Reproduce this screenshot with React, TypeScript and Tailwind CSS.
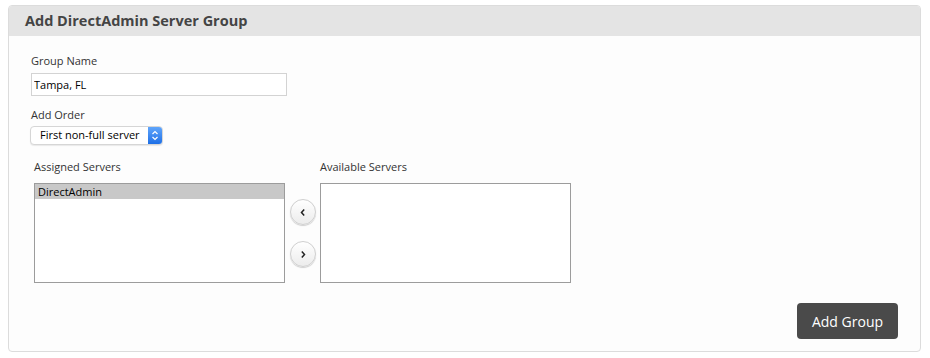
import React from 'react';

const labelCls = "text-[11px] leading-[16px] text-[#333]";

const ArrowButton: React.FC<{ dir: 'left' | 'right' }> = ({ dir }) => (
  <button
    type="button"
    className="w-[26px] h-[26px] rounded-full border border-[#cfcfcf] bg-gradient-to-b from-white to-[#ececec] shadow-[0_1px_1px_rgba(0,0,0,0.18)] flex items-center justify-center"
  >
    <svg width="8" height="9" viewBox="0 0 8 9">
      {dir === 'left' ? (
        <path d="M5.2 1.5 L2.5 4.5 L5.2 7.5" fill="none" stroke="#222" strokeWidth="1.5" />
      ) : (
        <path d="M2.8 1.5 L5.5 4.5 L2.8 7.5" fill="none" stroke="#222" strokeWidth="1.5" />
      )}
    </svg>
  </button>
);

const App: React.FC = () => {
  return (
    <div className="w-[930px] h-[358px] bg-white pt-[5px] pl-[8px]" style={{ fontFamily: '"Open Sans", sans-serif' }}>
      <div className="w-[913px] h-[347px] border border-[#dcdcdc] rounded-[4px] bg-[#fdfdfd] flex flex-col overflow-hidden">
        <div className="h-[30px] bg-[#e4e4e4] px-[16px] flex items-center">
          <h2 className="text-[14.5px] font-bold text-[#444]">Add DirectAdmin Server Group</h2>
        </div>
        <div className="flex-1 flex flex-col pl-[22px] pr-[22px] pt-[17px]">
          <label className={labelCls}>Group Name</label>
          <input
            type="text"
            defaultValue="Tampa, FL"
            className="mt-[4px] w-[256px] h-[23px] border border-[#d3d3d3] bg-white px-[2px] text-[11px] text-black outline-none"
          />
          <label className={`${labelCls} mt-[11px]`}>Add Order</label>
          <div className="mt-[3px] -ml-[1px] w-[133px] h-[19px] flex rounded-[4px] border border-[#d6d6d6] bg-white shadow-[0_1px_1px_rgba(0,0,0,0.08)]">
            <div className="flex-1 flex items-center pl-[9px] text-[11px] text-black whitespace-nowrap">First non-full server</div>
            <div className="w-[14px] h-full rounded-r-[3px] bg-gradient-to-b from-[#5fa5fb] to-[#1d6fe6] flex items-center justify-center">
              <svg width="8" height="11" viewBox="0 0 8 11">
                <path d="M1.5 4 L4 1.5 L6.5 4 M1.5 7 L4 9.5 L6.5 7" fill="none" stroke="#fff" strokeWidth="1.2" />
              </svg>
            </div>
          </div>
          <div className="mt-[14px] ml-[3px] flex">
            <div className="flex flex-col">
              <span className={labelCls}>Assigned Servers</span>
              <div className="mt-[8px] w-[251px] h-[100px] border border-[#9c9c9c] bg-white">
                <div className="h-[15px] bg-[#c8c8c8] px-[3px] text-[11px] leading-[15px] text-black">DirectAdmin</div>
              </div>
            </div>
            <div className="w-[35px] flex flex-col items-center pt-[40px] gap-[16px]">
              <ArrowButton dir="left" />
              <ArrowButton dir="right" />
            </div>
            <div className="flex flex-col">
              <span className={labelCls}>Available Servers</span>
              <div className="mt-[8px] w-[251px] h-[100px] border border-[#9c9c9c] bg-white" />
            </div>
          </div>
          <div className="mt-[20px] flex justify-end">
            <button
              type="button"
              className="w-[101px] h-[36px] rounded-[4px] bg-[#4a4a4a] text-white text-[14px]"
            >
              Add Group
            </button>
          </div>
        </div>
      </div>
    </div>
  );
};

export default App;
